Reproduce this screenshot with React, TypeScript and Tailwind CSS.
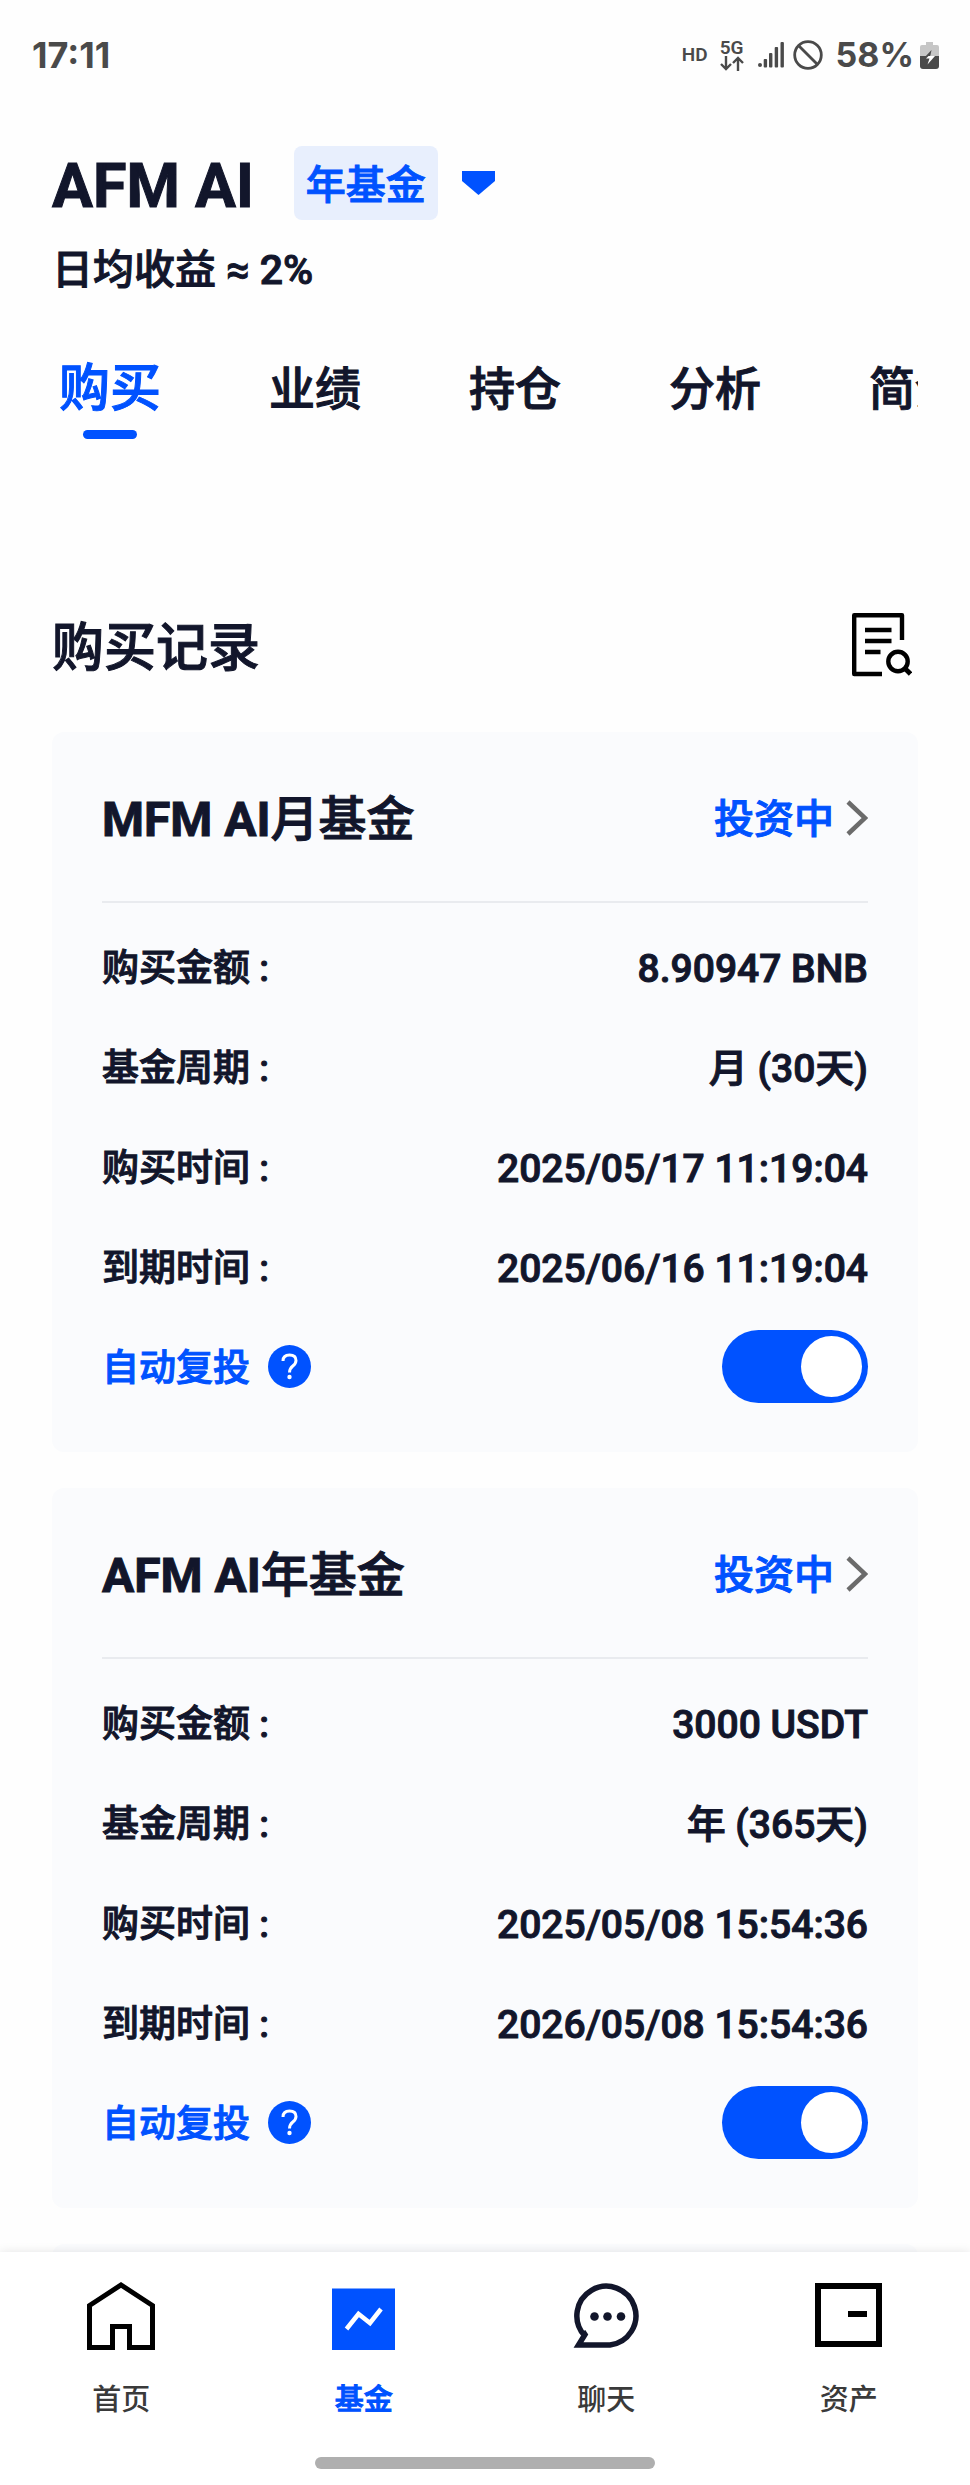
import React, { useState } from "react";

const TABS = ["购买", "业绩", "持仓", "分析", "简介"];

const RECORDS = [
  {
    id: "mfm",
    name: "MFM AI",
    term: "月基金",
    status: "投资中",
    rows: [
      ["购买金额", "8.90947 BNB"],
      ["基金周期", "月 (30天)"],
      ["购买时间", "2025/05/17 11:19:04"],
      ["到期时间", "2025/06/16 11:19:04"],
    ],
  },
  {
    id: "afm",
    name: "AFM AI",
    term: "年基金",
    status: "投资中",
    rows: [
      ["购买金额", "3000 USDT"],
      ["基金周期", "年 (365天)"],
      ["购买时间", "2025/05/08 15:54:36"],
      ["到期时间", "2026/05/08 15:54:36"],
    ],
  },
];

function StatusBar() {
  return (
    <div className="flex h-[110px] shrink-0 items-center justify-between pl-8 pr-[31px] font-['Inter',sans-serif] text-[34px] leading-10 font-bold text-[#4a4a4a]">
      <span className="text-[36px]">17:11</span>
      <div className="flex items-center">
        <span className="mr-3 font-['Roboto',sans-serif] text-[19px] leading-5 font-semibold">
          HD
        </span>
        <div className="mr-[14px] flex flex-col items-center">
          <span className="font-['Roboto',sans-serif] text-[19px] leading-4 font-semibold">
            5G
          </span>
          <svg width="24" height="15" viewBox="0 0 24 15" fill="none" stroke="currentColor" strokeWidth="2.4">
            <path d="M6 0v13M1 8l5 5 5-5M18 15V2M13 7l5-5 5 5" />
          </svg>
        </div>
        <svg className="mr-[9px]" width="26" height="26" viewBox="0 0 26 26" fill="currentColor">
          <rect x="0" y="21" width="4" height="4" rx="2" />
          <rect x="5.700" y="17" width="3.400" height="8.500" rx="1" />
          <rect x="11" y="11" width="3.400" height="14.500" rx="1" />
          <rect x="16.700" y="5" width="3.400" height="20.500" rx="1" />
          <rect x="22.500" y="0" width="3.400" height="25.500" rx="1" />
        </svg>
        <svg className="mr-[13px]" width="30" height="30" viewBox="0 0 30 30" fill="none" stroke="currentColor" strokeWidth="2.8">
          <circle cx="15" cy="15" r="13.3" />
          <path d="M6 6l18 18" />
        </svg>
        <span className="mr-[6px]">58%</span>
        <svg width="19" height="27" viewBox="0 0 19 27">
          <path d="M6 0h7v3h4q2 0 2 2v9H0V5q0-2 2-2h4z" fill="#c6c6c6" />
          <path d="M0 14h19v10q0 3-3 3H3q-3 0-3-3z" fill="#4a4a4a" />
          <path d="M11.500 8L4 16h5l1.500-3z" fill="#4a4a4a" />
          <path d="M8.500 14H15l-7.500 8.500 2-6H6z" fill="#fff" />
        </svg>
      </div>
    </div>
  );
}

function FundHeader() {
  return (
    <header className="px-[52px] pt-9">
      <div className="flex items-center">
        <h1 className="pt-[6px] text-[61px] leading-[68px] font-bold">AFM AI</h1>
        <button type="button" className="ml-10 flex items-center gap-6 text-[40px] text-[#0052ff]">
          <span className="rounded-lg bg-[#e8effd] px-3 pt-[6px] leading-[68px] font-medium">年基金</span>
          <svg width="33" height="24" viewBox="0 0 33 24" fill="currentColor">
            <path d="M0 0h33v10L16.500 24 0 10z" />
          </svg>
        </button>
      </div>
      <p className="mt-5 text-[41px] leading-[60px] font-medium">日均收益 ≈ 2%</p>
    </header>
  );
}

function FundTabs() {
  const [active, setActive] = useState(0);

  return (
    <nav className="mx-[52px] mt-9 flex h-[104px] gap-[108px] overflow-hidden px-[7px]">
      {TABS.map((tab, i) => (
        <button
          key={tab}
          type="button"
          onClick={() => setActive(i)}
          className="flex shrink-0 flex-col items-center"
        >
          <span
            className={
              i === active
                ? "text-[51px] leading-[106px] font-medium text-[#0052ff]"
                : "text-[46px] leading-[106px] font-medium"
            }
          >
            {tab}
          </span>
          {i === active && <span className="-mt-3 h-[9px] w-[54px] shrink-0 rounded-full bg-[#0052ff]" />}
        </button>
      ))}
    </nav>
  );
}

function RecordCard({ record }: { record: (typeof RECORDS)[number] }) {
  const [auto, setAuto] = useState(true);

  return (
    <article className="rounded-xl bg-[#fafbfd] px-[50px] pb-[38px]">
      <div className="flex h-[171px] items-center justify-between border-b-2 border-[#e9ebef] pt-[6px]">
        <h3 className="text-[48px] leading-[60px] font-medium">
          <span className="font-bold">{record.name}</span>
          {record.term}
        </h3>
        <a href="#detail" className="flex items-center gap-3 text-[40px] leading-[60px] font-medium text-[#0052ff]">
          {record.status}
          <svg className="mb-1" width="22" height="36" viewBox="0 0 22 36" fill="none" stroke="#6b6b6b" strokeWidth="4.500">
            <path d="M2 2l17 16L2 34" />
          </svg>
        </a>
      </div>
      <dl className="pt-4">
        {record.rows.map(([label, value]) => (
          <div key={label} className="flex h-[100px] items-center justify-between">
            <dt className="text-[37px] font-medium">{label} :</dt>
            <dd className="text-[39px] font-medium">{value}</dd>
          </div>
        ))}
      </dl>
      <div className="flex h-[95px] items-center justify-between text-[#0052ff]">
        <div className="flex items-center gap-[18px]">
          <label htmlFor={record.id} className="pt-1 text-[37px] font-medium">
            自动复投
          </label>
          <button type="button" aria-label="说明">
            <svg width="43" height="43" viewBox="0 0 43 43" fill="none">
              <circle cx="21.500" cy="21.500" r="21.500" fill="#0052ff" />
              <path d="M15 16q0-6 6.500-6t6.500 5.500q0 3-3.200 5.500t-3.300 6.500" stroke="#fff" strokeWidth="3" />
              <circle cx="21.500" cy="32" r="2.200" fill="#fff" />
            </svg>
          </button>
        </div>
        <input
          id={record.id}
          type="checkbox"
          role="switch"
          checked={auto}
          onChange={() => setAuto(!auto)}
          className="h-[73px] w-[146px] appearance-none rounded-full bg-gray-300 p-[6px] before:block before:size-[61px] before:rounded-full before:bg-white checked:bg-[#0052ff] checked:before:ml-auto"
        />
      </div>
    </article>
  );
}

function BottomNav() {
  return (
    <footer className="z-10 shrink-0 bg-white shadow-[0_0_10px_rgba(0,0,0,0.1)]">
      <nav className="grid grid-cols-4 pt-[30px] text-[29px] leading-10 font-medium text-[#3a3a3a]">
        <a href="#home" className="flex flex-col items-center gap-[30px]">
          <svg width="68" height="68" viewBox="0 0 68 68" fill="none" stroke="#000" strokeWidth="5">
            <path d="M2.500 65.500V23.500L34 3l31.500 20.500v42h-23V44.500h-17v21z" />
          </svg>
          首页
        </a>
        <a href="#fund" className="flex flex-col items-center gap-[30px] text-[#0052ff] [-webkit-text-stroke-width:1px]">
          <svg width="68" height="68" viewBox="0 0 68 68" fill="none">
            <path d="M2 6.500h63V68H2z" fill="#0052ff" />
            <path d="M16.500 47l12-15 11.500 9 11-14" stroke="#fff" strokeWidth="4.500" />
          </svg>
          基金
        </a>
        <a href="#chat" className="flex flex-col items-center gap-[30px]">
          <svg width="68" height="68" viewBox="0 0 68 68" fill="none">
            <path
              d="M12.500 53.500A29.500 29.500 0 1 1 38 63H6.500l6.500-10.500-2-3"
              stroke="#12162b"
              strokeWidth="5.500"
            />
            <circle cx="22.500" cy="34.500" r="4.300" fill="#12162b" />
            <circle cx="35.500" cy="34.500" r="4.300" fill="#12162b" />
            <circle cx="49" cy="34.500" r="4.300" fill="#12162b" />
          </svg>
          聊天
        </a>
        <a href="#assets" className="flex flex-col items-center gap-[30px]">
          <svg width="68" height="68" viewBox="0 0 68 68" fill="none" stroke="#000" strokeWidth="6">
            <path d="M3 4h61v58H3zM33 32h19" />
          </svg>
          资产
        </a>
      </nav>
      <div className="mx-auto mt-[37px] mb-4 h-3 w-[35%] rounded-full bg-[#afafaf]" />
    </footer>
  );
}

function App() {
  return (
    <div className="flex h-screen flex-col bg-[#fefefe] font-['Roboto','Noto_Sans_CJK_SC',sans-serif] text-[#12162b]">
      <StatusBar />
      {/* thin text stroke: the CJK face has no medium weight */}
      <main className="min-h-0 flex-1 overflow-hidden [-webkit-text-stroke-width:1px]">
        <FundHeader />
        <FundTabs />
        <section className="px-[52px] pt-[170px]">
          <div className="flex items-center justify-between">
            <h2 className="pt-2 text-[52px] leading-[62px] font-medium">购买记录</h2>
            <button type="button" aria-label="查询记录" className="mr-[6px]">
              <svg width="60" height="64" viewBox="0 0 60 64" fill="none" stroke="#000" strokeWidth="4.400">
                <path d="M30 61H2.200V2.200H50V27" strokeLinejoin="round" />
                <path d="M13 17h26.500M13 28h26.500M13 39h15.500" />
                <circle cx="46" cy="48.500" r="9.700" />
                <path d="M52.500 55l6 6" strokeWidth="4.800" />
              </svg>
            </button>
          </div>
          <div className="mt-[52px] flex flex-col gap-9">
            {RECORDS.map((record) => (
              <RecordCard key={record.id} record={record} />
            ))}
            {/* next record, still below the tab bar */}
            <div className="h-20 rounded-xl bg-[#fafbfd]" />
          </div>
        </section>
      </main>
      <BottomNav />
    </div>
  );
}

export default App;
